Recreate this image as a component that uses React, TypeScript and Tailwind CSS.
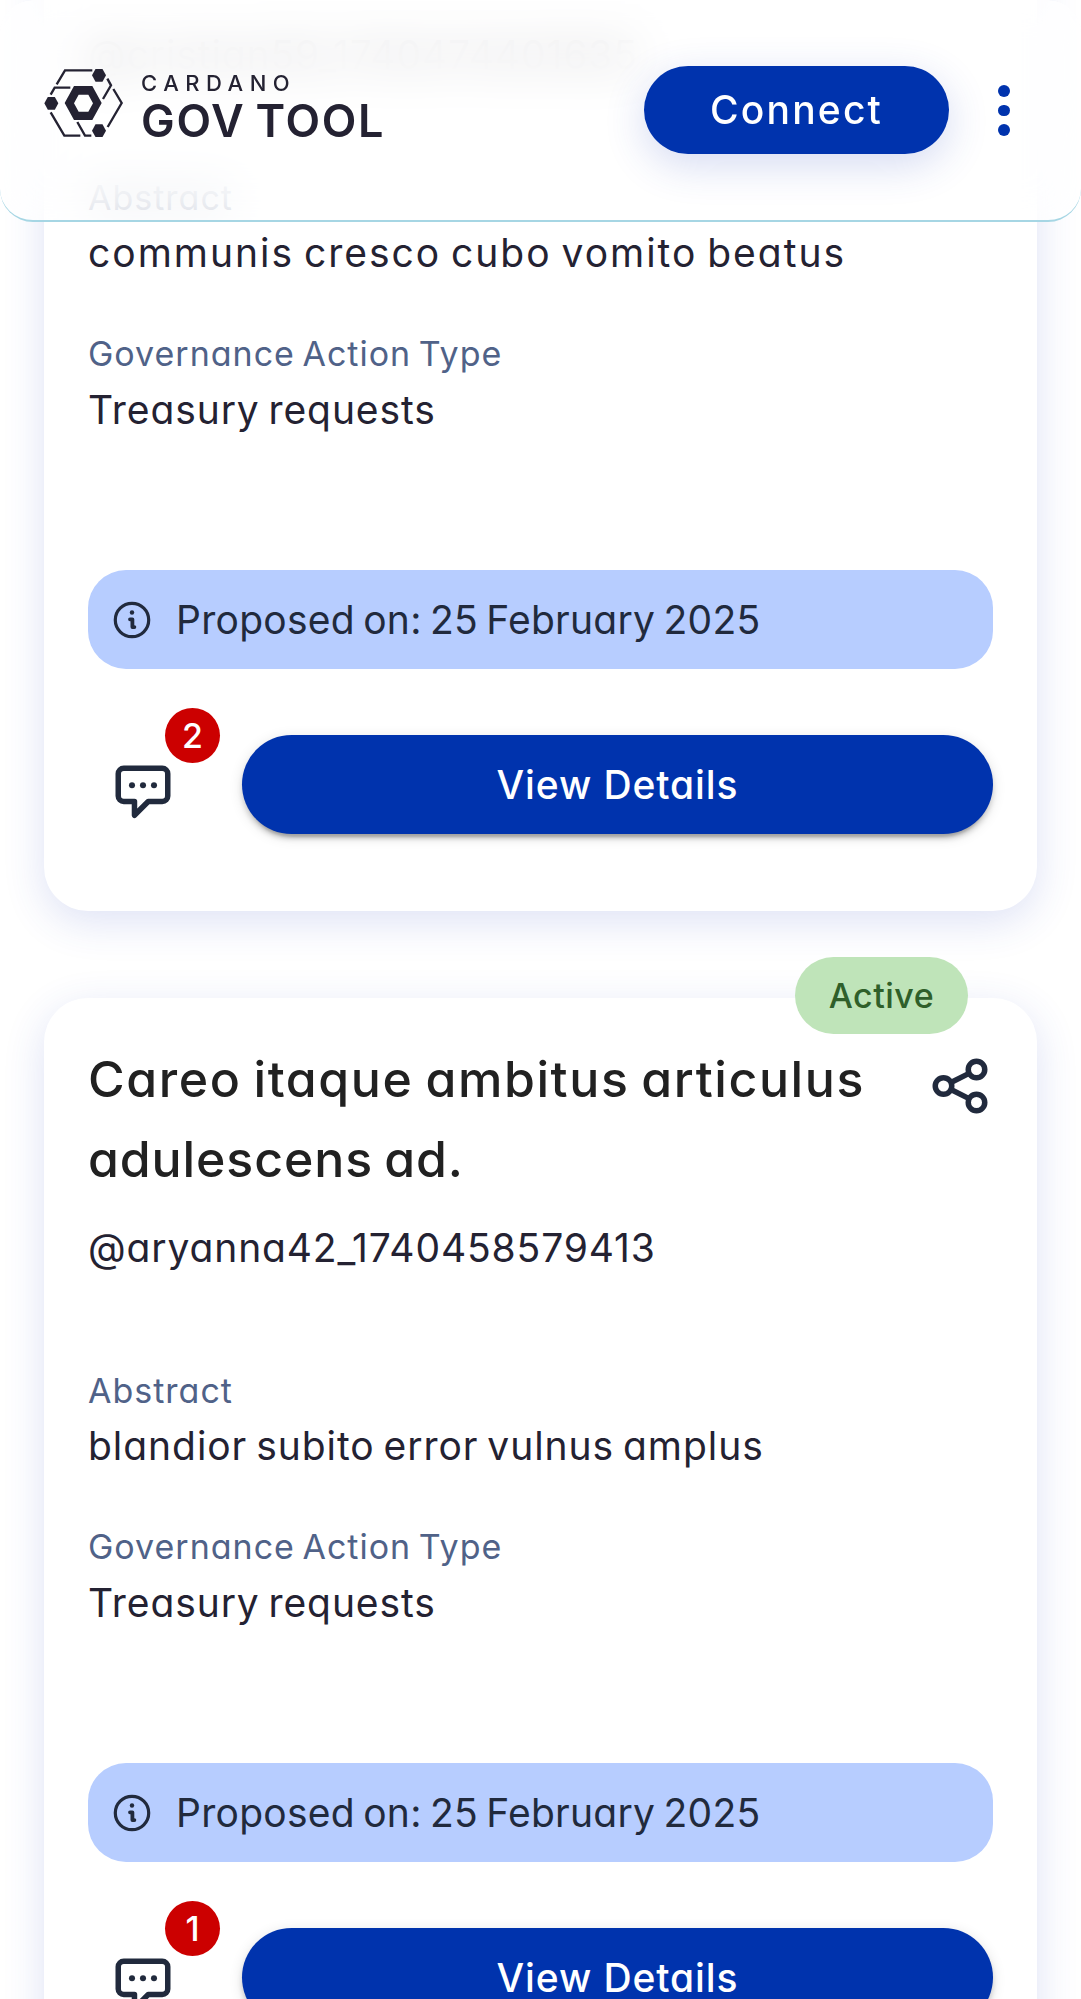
type Proposal = {
  title: string[];
  status?: string;
  handle: string;
  handleTracking: string;
  abstract: string;
  abstractTracking: string;
  comments: number;
};

const proposals: Proposal[] = [
  {
    title: [],
    handle: "@cristian59_1740474401635",
    handleTracking: "tracking-[0.9px]",
    abstract: "communis cresco cubo vomito beatus",
    abstractTracking: "tracking-[1.98px]",
    comments: 2,
  },
  {
    title: ["Careo itaque ambitus articulus", "adulescens ad."],
    status: "Active",
    handle: "@aryanna42_1740458579413",
    handleTracking: "tracking-[0.87px]",
    abstract: "blandior subito error vulnus amplus",
    abstractTracking: "tracking-[0.95px]",
    comments: 1,
  },
];

function Logo() {
  return (
    <svg viewBox="15 18 243 210" className="h-[70px] w-[81px] shrink-0" fill="none" stroke="#242232" strokeWidth="7">
      <path d="M56 67L81 25H163" />
      <path d="M38 98L50 77H97" />
      <path d="M38 151L79 221H127" />
      <path d="M118 180L141 221H160" />
      <path d="M226 81L251 123L209 195" />
      <path d="M208 50L219 70L195 111" />
      <g fill="#242232" stroke="none">
        <path d="M19 124L29.500 105H50.500L61 124L50.500 143H29.500Z" />
        <path d="M162 40L172.500 21H193.500L204 40L193.500 59H172.500Z" />
        <path d="M162 206L172.500 187H193.500L204 206L193.500 225H172.500Z" />
        <path
          fillRule="evenodd"
          d="M80 123L108 72H163L191 123L163 174H108ZM108 123.500L122 149H151L165 123.500L151 98H122Z"
        />
      </g>
    </svg>
  );
}

function InfoIcon() {
  return (
    <svg viewBox="0 0 40 40" className="size-10 shrink-0" fill="none" stroke="#212a3d">
      <circle cx="20" cy="20" r="16.700" strokeWidth="3.200" />
      <circle cx="20" cy="12.500" r="2.200" fill="#212a3d" stroke="none" />
      <path d="M18 19.300h2.400v7.800h2" strokeWidth="3.800" strokeLinecap="round" strokeLinejoin="round" />
    </svg>
  );
}

function CommentIcon() {
  return (
    <svg viewBox="0 0 24 24" className="size-[66px]" fill="none" stroke="#212a3d" strokeWidth="2" strokeLinejoin="round">
      <path d="M5 3h14a2 2 0 0 1 2 2v8.100a2 2 0 0 1-2 2h-5.100l-5 5v-5H5a2 2 0 0 1-2-2V5a2 2 0 0 1 2-2z" />
      <g fill="#212a3d" stroke="none">
        <circle cx="8" cy="9.200" r="1.100" />
        <circle cx="12" cy="9.200" r="1.100" />
        <circle cx="16" cy="9.200" r="1.100" />
      </g>
    </svg>
  );
}

function ShareIcon() {
  return (
    <svg viewBox="0 0 24 24" className="size-[66px]" fill="none" stroke="#212a3d" strokeWidth="2">
      <circle cx="6" cy="12" r="3" />
      <circle cx="18" cy="6" r="3" />
      <circle cx="18" cy="18" r="3" />
      <path d="M8.700 10.700L15.300 7.400M8.700 13.300L15.300 16.600" />
    </svg>
  );
}

function Field({ label, labelTracking, value, tracking, gap }: { label: string; labelTracking: string; value: string; tracking: string; gap: string }) {
  return (
    <div>
      <div className={`text-[34px] leading-[50px] whitespace-nowrap text-[#506288] ${labelTracking}`}>{label}</div>
      <div className={`text-[39px] leading-[58px] whitespace-nowrap text-[#242232] ${gap} ${tracking}`}>{value}</div>
    </div>
  );
}

function Card({ p }: { p: Proposal }) {
  return (
    <article className="relative flex h-[1106px] shrink-0 flex-col rounded-[44px] bg-white px-11 pt-[41px] shadow-[0_11px_41px_rgba(47,75,190,0.16)]">
      {p.status && (
        <div className="absolute -top-[41px] right-[69px] flex h-[77px] w-[173px] items-center justify-center rounded-full bg-[#bfe4b9] text-[34px] font-medium tracking-[0.5px] text-[#2f5f2a]">
          {p.status}
        </div>
      )}
      <div className="flex h-40 items-start justify-between">
        <h2 className="text-[50px] leading-[80px] font-medium whitespace-nowrap text-[#212121]">
          {p.title.map((line, i) => (
            <span key={line} className={i === 0 ? "block tracking-[1.6px]" : "block tracking-[0.9px]"}>
              {line}
            </span>
          ))}
        </h2>
        <div className="mt-3.5">
          <ShareIcon />
        </div>
      </div>
      <div className={`mt-[19px] text-[39px] leading-[60px] whitespace-nowrap text-[#242232] ${p.handleTracking}`}>{p.handle}</div>
      <div className="mt-[88px] flex flex-col gap-[47px]">
        <Field label="Abstract" labelTracking="tracking-[1px]" value={p.abstract} tracking={p.abstractTracking} gap="mt-px" />
        <Field label="Governance Action Type" labelTracking="tracking-[1px]" value="Treasury requests" tracking="tracking-[0.9px]" gap="mt-0.5" />
      </div>
      <div className="mt-[131px] flex h-[99px] shrink-0 items-center gap-6 rounded-[38px] bg-[#b7cdff] pl-6">
        <InfoIcon />
        <span className="pt-px text-[39px] tracking-[0.27px] whitespace-nowrap text-[#212a3d]">Proposed on: 25 February 2025</span>
      </div>
      <div className="mt-[66px] flex h-[99px] shrink-0">
        <div className="relative w-[154px] pt-[25px] pl-[22px]">
          <CommentIcon />
          <span className="absolute -top-[27px] left-[77px] flex size-[55px] items-center justify-center rounded-full bg-[#cc0000] text-[34px] font-medium text-white">
            {p.comments}
          </span>
        </div>
        <button className="flex-1 rounded-full bg-[#0033ad] pt-px text-[39px] font-medium tracking-[0.9px] text-white shadow-[0_8px_3px_-5px_rgba(0,0,0,0.2),0_5px_5px_rgba(0,0,0,0.14),0_3px_14px_rgba(0,0,0,0.12)]">
          View Details
        </button>
      </div>
    </article>
  );
}

function Header() {
  return (
    <header className="absolute inset-x-0 top-0 h-[222px]">
      <div className="absolute inset-0 rounded-[33px] bg-white/75 [mask-image:linear-gradient(rgba(0,0,0,0.985)_35%,rgba(0,0,0,0.91)_70%)] backdrop-blur-[24px]" />
      <div className="relative flex h-full rounded-[33px] border-b-2 border-[#a6d6e4] pr-[71px] pl-[43px]">
        <div className="flex items-start pt-[68px]">
          <Logo />
          <div className="flex flex-col pt-1 pl-[17px] whitespace-nowrap text-[#242232]">
            <span className="text-[22px] leading-[22px] font-medium tracking-[6.500px]">CARDANO</span>
            <span className="mt-[5px] text-[45px] leading-[44px] font-semibold tracking-[1.7px]">GOV TOOL</span>
          </div>
        </div>
        <div className="ml-auto flex items-start pt-[66px]">
          <button className="h-[88px] w-[305px] rounded-full bg-[#0033ad] text-[39px] font-medium tracking-[2.2px] text-white shadow-[0_11px_41px_rgba(47,75,190,0.2)]">
            Connect
          </button>
          <div className="mt-[19px] ml-[49px] flex w-3 flex-col gap-2">
            <span className="size-[11.500px] rounded-full bg-[#0033ad]" />
            <span className="size-[11.500px] rounded-full bg-[#0033ad]" />
            <span className="size-[11.500px] rounded-full bg-[#0033ad]" />
          </div>
        </div>
      </div>
    </header>
  );
}

export default function App() {
  return (
    <div className="relative h-[1999px] w-[1081px] overflow-hidden bg-white font-['Inter',sans-serif] [font-feature-settings:'cv11'] [word-spacing:-3px]">
      <main className="-mt-[195px] flex flex-col gap-[87px] px-11">
        {proposals.map((p) => (
          <Card key={p.handle} p={p} />
        ))}
      </main>
      <Header />
    </div>
  );
}
